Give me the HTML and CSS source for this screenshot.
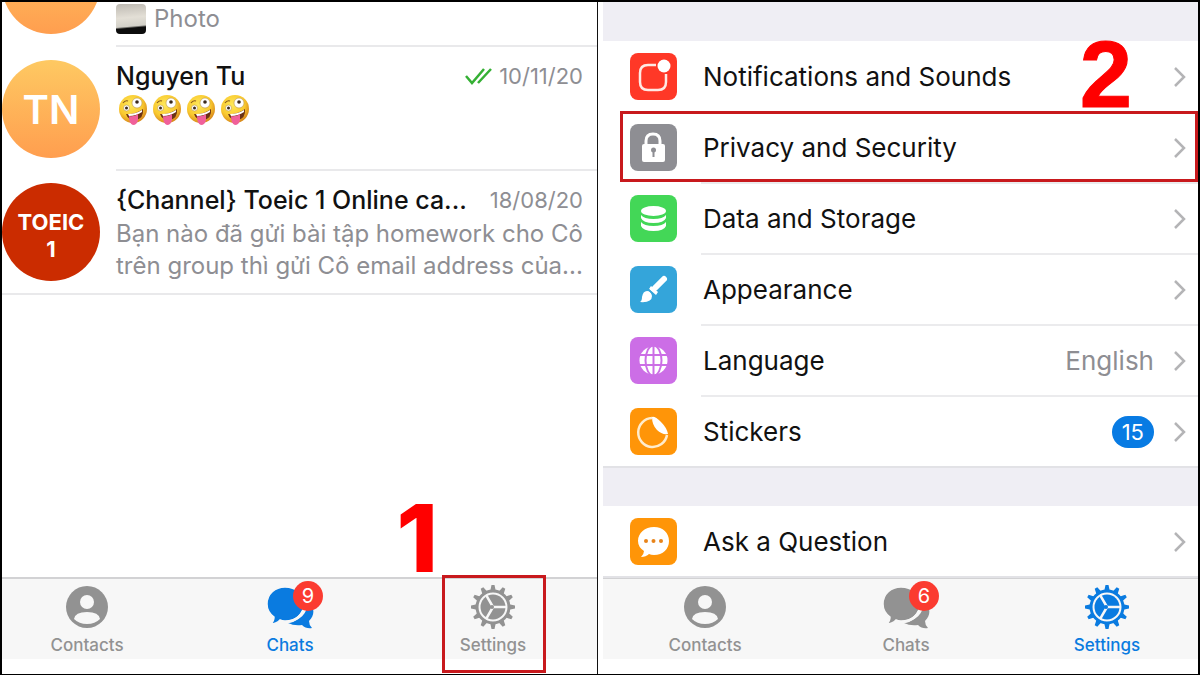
FILE: index.html
```html
<!DOCTYPE html>
<html lang="en">
<head>
  <meta charset="utf-8">
  <title>Telegram Settings Guide</title>
  <link rel="stylesheet" href="styles.css">
</head>
<body>

  <svg class="sprite" aria-hidden="true">
    <defs>
      <radialGradient id="face" cx="42%" cy="35%" r="65%">
        <stop offset="0" stop-color="#ffe95a"/>
        <stop offset="0.65" stop-color="#f9c92f"/>
        <stop offset="1" stop-color="#d98a1c"/>
      </radialGradient>
    </defs>
    <symbol id="zany" viewBox="0 0 30 32">
      <circle cx="15" cy="15" r="14" fill="url(#face)"/>
      <circle cx="19" cy="9" r="5" fill="#fff" stroke="#b9964a" stroke-width="0.6"/>
      <circle cx="19" cy="8" r="1.8" fill="#3b2a1c"/>
      <circle cx="8.500" cy="14" r="3" fill="#fff" stroke="#b9964a" stroke-width="0.6"/>
      <circle cx="8.500" cy="14" r="1.5" fill="#3b2a1c"/>
      <path d="M5 9q2-3 5-2" fill="none" stroke="#8a5a1c" stroke-width="1.200"/>
      <path d="M8 20q9 1 17-5q1 10-8 11q-7 0-9-6z" fill="#6b3216"/>
      <path d="M10 20q8 0 14-4l0 2q-6 4-13 4z" fill="#fff"/>
      <path d="M11 22q5 1 9-2l0 6q-1 5-5 5q-4-1-4-9z" fill="#f0609a"/>
    </symbol>
    <symbol id="chevron" viewBox="0 0 12 20">
      <path d="M1 1l9 9l-9 9" fill="none" stroke="#b4b4b6" stroke-width="2.500"/>
    </symbol>
    <symbol id="contacts" viewBox="0 0 44 44">
      <circle cx="22" cy="22" r="21" fill="currentColor"/>
      <circle cx="22" cy="17" r="7" fill="#f7f7f7"/>
      <path d="M9 34q1-7 13-7t13 7q-5 5-13 5t-13-5z" fill="#f7f7f7"/>
    </symbol>
    <symbol id="chats" viewBox="0 0 48 44">
      <path d="M42 16c7 6 7 14 1 20q0 4 3 7q-6 1-10-3q-8 1-14-2c11-2 20-9 20-22z" fill="currentColor"/>
      <path d="M19 2c11 0 19 7 19 17s-8 17-19 17q-3 0-5-1q-4 4-9 4q3-3 3-7q-7-5-7-13c0-10 8-17 18-17z" fill="currentColor" stroke="#f7f7f7" stroke-width="1.500"/>
      <path d="M37 26q-4 9-15 11" fill="none" stroke="#f7f7f7" stroke-width="2.500"/>
    </symbol>
    <symbol id="gear" viewBox="0 0 44 44">
      <g fill="currentColor">
        <path id="teeth" d="M20.500 0h3l1.500 7h-6zM20.500 44h3l1.500-7h-6z"/>
        <use href="#teeth" transform="rotate(30 22 22)"/>
        <use href="#teeth" transform="rotate(60 22 22)"/>
        <use href="#teeth" transform="rotate(90 22 22)"/>
        <use href="#teeth" transform="rotate(120 22 22)"/>
        <use href="#teeth" transform="rotate(150 22 22)"/>
      </g>
      <circle cx="22" cy="22" r="16" fill="#f7f7f7" stroke="currentColor" stroke-width="3"/>
      <circle cx="22" cy="22" r="12.500" fill="currentColor"/>
      <path d="M22 22h14M22 22l-7-12.100M22 22l-7 12.100" stroke="#f7f7f7" stroke-width="2.500"/>
      <circle cx="21" cy="22" r="2" fill="currentColor"/>
    </symbol>
  </svg>

  <main class="board">
    <!-- Step 1: chat list -->
    <section class="panel chats-panel">
      <ul class="chat-list">
        <li class="chat chat-cut">
          <span class="avatar avatar-orange"></span>
          <div class="chat-body">
            <p class="chat-photo"><span class="thumb"></span>Photo</p>
          </div>
        </li>
        <li class="chat">
          <span class="avatar avatar-orange">TN</span>
          <div class="chat-body">
            <div class="chat-head">
              <h3>Nguyen Tu</h3>
              <span class="date">
                <svg width="28" height="18" viewBox="0 0 28 18"><path d="M1 9l6 7L19 2M13 16L26 2" fill="none" stroke="#35b034" stroke-width="2.500"/></svg>
                10/11/20
              </span>
            </div>
            <p class="emojis">
              <svg width="30" height="32"><use href="#zany"/></svg>
              <svg width="30" height="32"><use href="#zany"/></svg>
              <svg width="30" height="32"><use href="#zany"/></svg>
              <svg width="30" height="32"><use href="#zany"/></svg>
            </p>
          </div>
        </li>
        <li class="chat">
          <span class="avatar avatar-red">TOEIC<br>1</span>
          <div class="chat-body">
            <div class="chat-head">
              <h3>{Channel} Toeic 1 Online ca...</h3>
              <span class="date">18/08/20</span>
            </div>
            <p class="preview">Bạn nào đã gửi bài tập homework cho Cô<br>trên group thì gửi Cô email address của...</p>
          </div>
        </li>
      </ul>

      <nav class="tabs">
        <a class="tab" href="#"><svg width="44" height="44"><use href="#contacts"/></svg>Contacts</a>
        <a class="tab active" href="#"><svg width="48" height="44"><use href="#chats"/></svg>Chats<span class="badge">9</span></a>
        <a class="tab marked" href="#"><svg width="44" height="44"><use href="#gear"/></svg>Settings<b class="step step-one">1</b></a>
      </nav>
    </section>

    <!-- Step 2: settings list -->
    <section class="panel settings-panel">
      <div class="settings">
        <ul class="group">
          <li><a class="row" href="#">
            <svg class="icon icon-red" width="47" height="47" viewBox="0 0 47 47">
              <path d="M26 12H18q-8 0-8 8v9q0 8 8 8h10q8 0 8-8V21" fill="none" stroke="#ffe9e4" stroke-width="2.500"/>
              <circle cx="34" cy="13" r="6.500" fill="#fff"/>
            </svg>
            <span class="label">Notifications and Sounds</span>
            <svg width="12" height="20"><use href="#chevron"/></svg>
          </a></li>
          <li><a class="row marked" href="#">
            <svg class="icon icon-gray" width="47" height="47" viewBox="0 0 47 47">
              <path d="M16 21v-4q0-7 7-7t7 7v4" fill="none" stroke="#fff" stroke-width="3"/>
              <rect x="12" y="20" width="23" height="18" rx="2" fill="#fff"/>
              <circle cx="23.500" cy="26" r="2.500" fill="#8e8e93"/>
              <path d="M23.500 26v7" stroke="#8e8e93" stroke-width="2"/>
            </svg>
            <span class="label">Privacy and Security</span>
            <svg width="12" height="20"><use href="#chevron"/></svg>
            <b class="step step-two">2</b>
          </a></li>
          <li><a class="row" href="#">
            <svg class="icon icon-green" width="47" height="47" viewBox="0 0 47 47">
              <ellipse cx="23.500" cy="16" rx="12.500" ry="5" fill="#fff"/>
              <path d="M11 20q3 4 12.500 4T36 20v3q-2 5-12.500 5T11 23zM11 27q3 4 12.500 4T36 27v4q-2 5-12.500 5T11 31z" fill="#fff"/>
            </svg>
            <span class="label">Data and Storage</span>
            <svg width="12" height="20"><use href="#chevron"/></svg>
          </a></li>
          <li><a class="row" href="#">
            <svg class="icon icon-blue" width="47" height="47" viewBox="0 0 47 47">
              <path d="M34 13L25 22" stroke="#fff" stroke-width="6" stroke-linecap="round"/>
              <path d="M21 20l7 6l-2 3l-7-6z" fill="#fff"/>
              <path d="M17 25q4 0 5 5q0 7-12 6q2-1 2-5q1-6 5-6z" fill="#fff"/>
              <path d="M18 23l6 6" stroke="#34a5da" stroke-width="1.500"/>
            </svg>
            <span class="label">Appearance</span>
            <svg width="12" height="20"><use href="#chevron"/></svg>
          </a></li>
          <li><a class="row" href="#">
            <svg class="icon icon-purple" width="47" height="47" viewBox="0 0 47 47">
              <circle cx="23.500" cy="23.500" r="14" fill="#fff"/>
              <g fill="none" stroke="#cc6ee6" stroke-width="2">
                <path d="M23.500 9v29M9 18h29M9 28h29"/>
                <ellipse cx="23.500" cy="23.500" rx="8" ry="15"/>
              </g>
            </svg>
            <span class="label">Language</span>
            <span class="value">English</span>
            <svg width="12" height="20"><use href="#chevron"/></svg>
          </a></li>
          <li><a class="row" href="#">
            <svg class="icon icon-orange" width="47" height="47" viewBox="0 0 47 47">
              <path d="M22 10a14.500 14.500 0 1 0 15 17" fill="none" stroke="#ffeccc" stroke-width="2.500"/>
              <path d="M22 9q3-1 9 5q6 6 7 12q-6 1-11-4q-5-5-5-13z" fill="#fff"/>
            </svg>
            <span class="label">Stickers</span>
            <span class="count">15</span>
            <svg width="12" height="20"><use href="#chevron"/></svg>
          </a></li>
        </ul>
        <ul class="group">
          <li><a class="row" href="#">
            <svg class="icon icon-orange" width="47" height="47" viewBox="0 0 47 47">
              <path d="M24 9c9 0 15 6 15 14s-6 14-15 14q-3 0-5-1q-3 3-8 3q3-3 3-6q-6-4-6-10c0-8 7-14 16-14z" fill="#fff"/>
              <g fill="#e8841a"><circle cx="16" cy="23" r="2"/><circle cx="23.500" cy="23" r="2"/><circle cx="31" cy="23" r="2"/></g>
            </svg>
            <span class="label">Ask a Question</span>
            <svg width="12" height="20"><use href="#chevron"/></svg>
          </a></li>
        </ul>
      </div>

      <nav class="tabs">
        <a class="tab" href="#"><svg width="44" height="44"><use href="#contacts"/></svg>Contacts</a>
        <a class="tab" href="#"><svg width="48" height="44"><use href="#chats"/></svg>Chats<span class="badge">6</span></a>
        <a class="tab active" href="#"><svg width="44" height="44"><use href="#gear"/></svg>Settings</a>
      </nav>
    </section>
  </main>

</body>
</html>
```

FILE: styles.css
```css
* {
  box-sizing: border-box;
}
body {
  margin: 0;
  font-family: Inter, "Liberation Sans", sans-serif;
  color: #111;
}
ul, p, h3 {
  margin: 0;
  padding: 0;
  list-style: none;
}
a {
  color: inherit;
  text-decoration: none;
}
svg {
  display: block;
  flex-shrink: 0;
}
.sprite {
  position: absolute;
  width: 0;
  height: 0;
}
.board {
  display: grid;
  grid-template-columns: 596fr 600fr;
  min-height: 100vh;
  border: 2px solid #000;
  background: #fff;
}
.panel {
  display: flex;
  flex-direction: column;
  min-width: 0;
  padding-bottom: 15px;
}
.chats-panel {
  border-right: 1px solid #111;
}
.settings-panel {
  padding-left: 5px;
}

/* chat list */
.chat-list {
  flex: 1;
}
.chat {
  display: flex;
  align-items: center;
  gap: 16px;
  height: 124px;
}
.chat:last-child {
  border-bottom: 2px solid #e9e9eb;
}
.chat-cut {
  align-items: flex-end;
  height: 45px;
  overflow: hidden;
}
.avatar {
  display: flex;
  align-items: center;
  justify-content: center;
  flex-shrink: 0;
  width: 98px;
  height: 98px;
  border-radius: 50%;
  color: #fff;
  text-align: center;
}
.chat-cut .avatar {
  margin-bottom: 13px;
}
.avatar-orange {
  background: linear-gradient(#fec962, #ff9e4f);
  font-size: 40px;
  font-weight: 600;
}
.avatar-red {
  padding-top: 8px;
  background: #cb2c00;
  font-size: 22px;
  font-weight: 700;
  line-height: 27px;
}
.chat-body {
  flex: 1;
  align-self: stretch;
  min-width: 0;
  padding: 13px 14px 0 0;
  border-bottom: 2px solid #e9e9eb;
}
.chat:last-child .chat-body {
  border-bottom: 0;
}
.chat-cut .chat-body {
  padding-top: 1px;
}
.chat-head {
  display: flex;
  align-items: center;
  justify-content: space-between;
  margin-bottom: 2px;
}
.chat-head h3 {
  font-size: 25px;
  font-weight: 500;
  line-height: 32px;
  white-space: nowrap;
}
.date {
  display: flex;
  align-items: center;
  gap: 6px;
  color: #8e8e93;
  font-size: 22px;
  line-height: 32px;
}
.emojis {
  display: flex;
  gap: 4px;
  padding: 0 2px;
}
.preview {
  color: #8e8e93;
  font-size: 24px;
  line-height: 32px;
  white-space: nowrap;
}
.chat-photo {
  display: flex;
  align-items: center;
  gap: 8px;
  color: #8e8e93;
  font-size: 24px;
  line-height: 32px;
}
.thumb {
  width: 30px;
  height: 30px;
  border-radius: 4px;
  background: linear-gradient(175deg, #bdb9b2, #e3dfd6 45%, #d2d0c8 72%, #0c0c0c 78%);
}

/* settings list */
.settings {
  flex: 1;
  background: #efeef4;
}
.group {
  margin-top: 39px;
  background: #fff;
}
.row {
  position: relative;
  display: flex;
  align-items: center;
  height: 71px;
  padding: 0 12px 0 27px;
}
.row::after {
  content: "";
  position: absolute;
  left: 98px;
  right: 0;
  bottom: -1px;
  height: 2px;
  background: #ebebed;
}
.group li:last-child .row::after {
  left: 0;
  background: #e2e2e6;
}
.icon {
  margin-right: 26px;
  border-radius: 8px;
}
.icon-red { background: #ff3827; }
.icon-gray { background: #8e8e93; }
.icon-green { background: #43d757; }
.icon-blue { background: #34a5da; }
.icon-purple { background: #cc6ee6; }
.icon-orange { background: #ff9508; }
.label {
  flex: 1;
  font-size: 26px;
}
.value {
  margin-right: 20px;
  color: #8e8e93;
  font-size: 26px;
}
.count {
  margin-right: 20px;
  padding: 0 10px;
  border-radius: 16px;
  background: #087be3;
  color: #fff;
  font-size: 22px;
  line-height: 32px;
}

/* bottom tabs */
.tabs {
  display: flex;
  justify-content: space-between;
  height: 82px;
  padding: 6px 52px 0 33px;
  border-top: 2px solid #d2d2d4;
  background: #f7f7f7;
}
.settings-panel .tabs {
  padding: 6px 39px 0 50px;
}
.tab {
  position: relative;
  display: flex;
  flex-direction: column;
  align-items: center;
  gap: 6px;
  width: 104px;
  color: #929292;
  font-size: 17px;
  font-weight: 500;
  line-height: 20px;
}
.tab.active {
  color: #0a7be0;
}
.badge {
  position: absolute;
  top: -4px;
  left: 55px;
  width: 30px;
  height: 30px;
  border-radius: 50%;
  background: #fb3b30;
  color: #fff;
  font-size: 20px;
  font-weight: 400;
  line-height: 30px;
  text-align: center;
}

/* red step marks */
.marked::before {
  content: "";
  position: absolute;
  border: 3px solid #c8191d;
  z-index: 1;
}
.tab.marked::before {
  inset: -10px -1px -14px 1px;
}
.row.marked::before {
  inset: -1px 0 1px 17px;
}
.step {
  position: absolute;
  color: #f00;
  font-size: 94px;
  font-weight: 800;
  line-height: 94px;
}
.step-one {
  right: 107px;
  bottom: 74px;
}
.step-two {
  right: 66px;
  bottom: 61px;
  font-family: "Liberation Sans", Arial, sans-serif;
  -webkit-text-stroke: 1px #f00;
}
```
